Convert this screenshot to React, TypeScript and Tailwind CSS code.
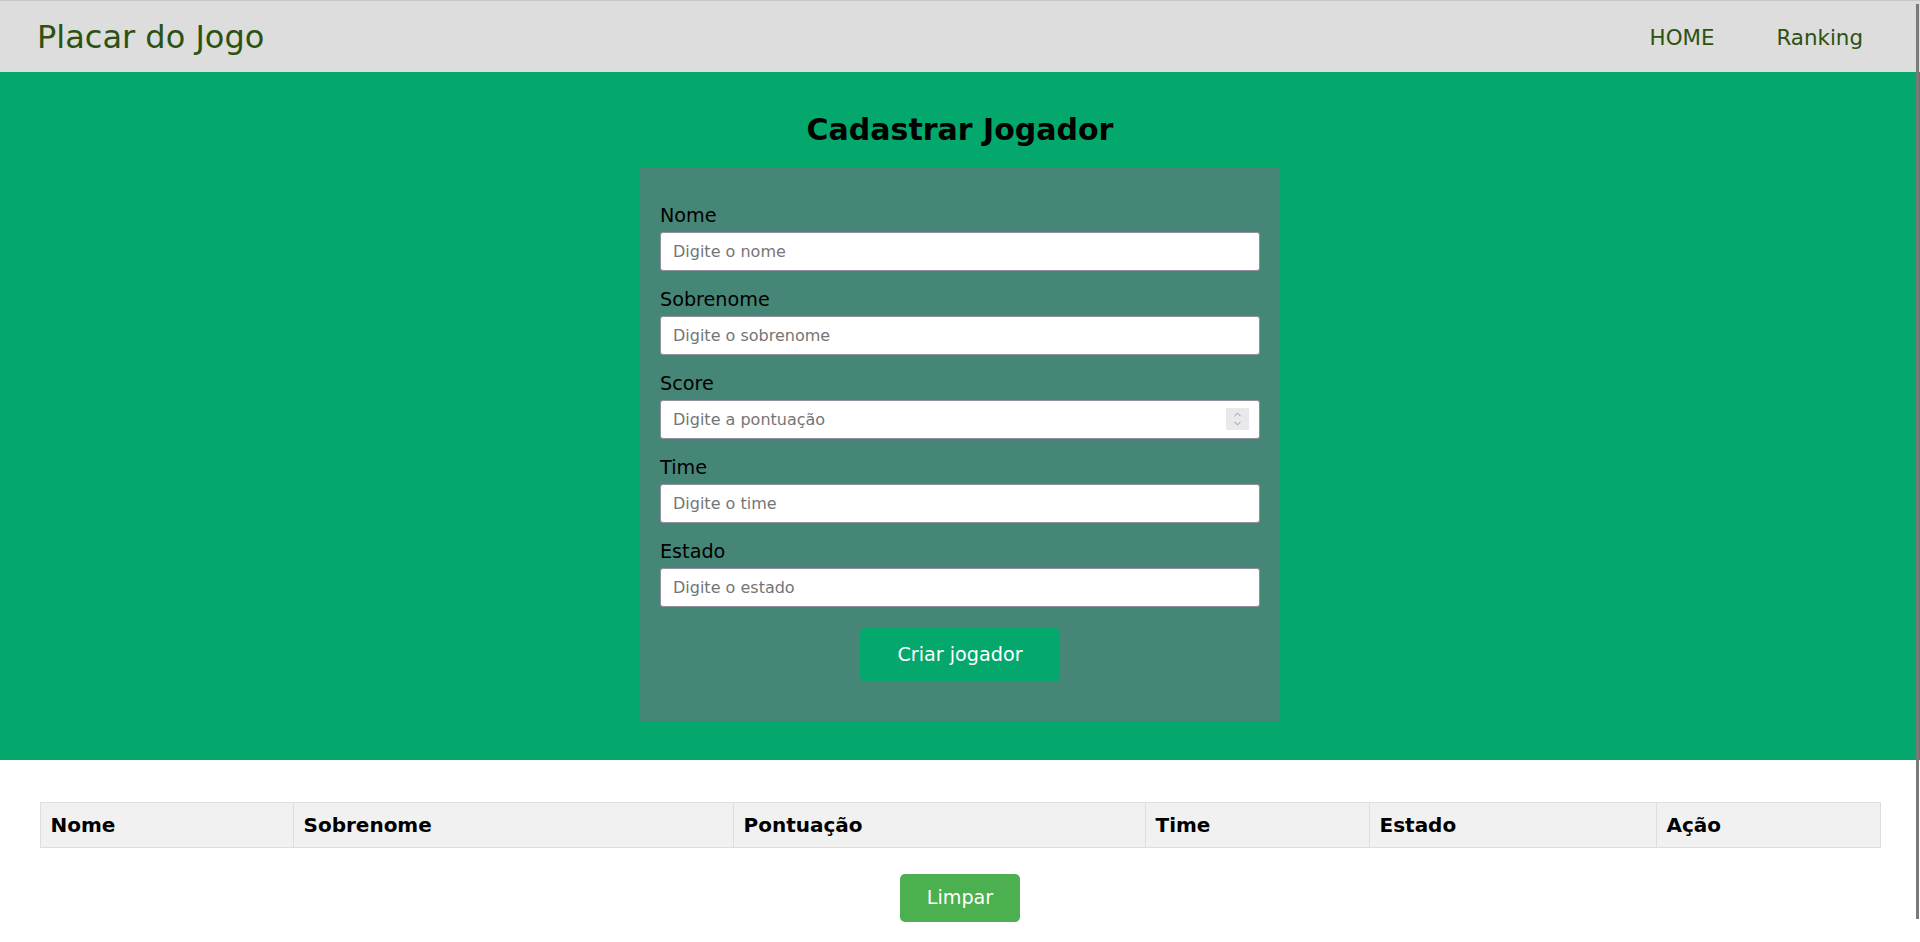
import { ChevronDown, ChevronUp } from 'lucide-react'

const fields = [
  { label: 'Nome', placeholder: 'Digite o nome' },
  { label: 'Sobrenome', placeholder: 'Digite o sobrenome' },
  { label: 'Score', placeholder: 'Digite a pontuação', number: true },
  { label: 'Time', placeholder: 'Digite o time' },
  { label: 'Estado', placeholder: 'Digite o estado' },
]

const columns = [
  { name: 'Nome', width: 'w-[253px]' },
  { name: 'Sobrenome', width: 'w-[440px]' },
  { name: 'Pontuação', width: 'w-[412px]' },
  { name: 'Time', width: 'w-[224px]' },
  { name: 'Estado', width: 'w-[287px]' },
  { name: 'Ação', width: 'w-[224px]' },
]

function Field({ label, placeholder, number }: { label: string; placeholder: string; number?: boolean }) {
  return (
    <div className="flex flex-col mb-[18px]">
      <label className="text-[19.2px] leading-[22px] text-black mb-[5px]">{label}</label>
      <div className="relative">
        <input
          type="text"
          placeholder={placeholder}
          className="w-full h-[39px] bg-white border border-[#8f8f9d] rounded-[3px] px-[12px] text-[16px] text-black placeholder:text-[#757575] outline-none"
        />
        {number && (
          <div className="absolute right-[11px] top-[8px] w-[23px] h-[22px] bg-[#e9e9ed] flex flex-col items-center justify-center text-[#8a8a96]">
            <ChevronUp size={11} strokeWidth={2} className="-mb-[2px]" />
            <ChevronDown size={11} strokeWidth={2} />
          </div>
        )}
      </div>
    </div>
  )
}

export default function App() {
  return (
    <div className="min-h-screen bg-white font-['DejaVu_Sans',sans-serif] pb-[28px]">
      <header className="h-[72px] border-t border-[#c6c6c6] bg-[#dddddd] flex items-center justify-between pl-[37px] pr-[57px]">
        <span className="text-[32px] text-[#2c5210]">Placar do Jogo</span>
        <nav className="flex items-center gap-[62px] mt-[3px] text-[21.4px] text-[#2c5210]">
          <a href="#">HOME</a>
          <a href="#">Ranking</a>
        </nav>
      </header>

      <section className="h-[688px] bg-[#04a86c] flex flex-col items-center pt-[40px]">
        <h2 className="text-[30px] leading-[35px] font-bold text-black mb-[20px]">Cadastrar Jogador</h2>
        <form className="w-[640px] bg-[#468677] rounded-[2px] px-[20px] pt-[38px] pb-[40px] flex flex-col">
          {fields.map((field) => (
            <Field key={field.label} {...field} />
          ))}
          <button
            type="button"
            className="self-center mt-[3px] w-[200px] h-[54px] rounded-[5px] bg-[#04a86c] text-white text-[19.2px] leading-[22px]"
          >
            Criar jogador
          </button>
        </form>
      </section>

      <section className="px-[40px] pt-[42px] flex flex-col items-center">
        <table className="w-full table-fixed border-collapse">
          <thead>
            <tr className="bg-[#f1f1f1]">
              {columns.map((col) => (
                <th
                  key={col.name}
                  className={`${col.width} h-[45px] border border-[#dddddd] px-[10px] text-left text-[20px] font-bold text-black`}
                >
                  {col.name}
                </th>
              ))}
            </tr>
          </thead>
        </table>
        <button
          type="button"
          className="mt-[26px] w-[120px] h-[48px] rounded-[5px] bg-[#4caf50] text-white text-[19.2px]"
        >
          Limpar
        </button>
      </section>

      <div className="fixed right-[1px] top-[4px] w-[3px] h-[915px] bg-[#7a7a7a]" />
    </div>
  )
}
